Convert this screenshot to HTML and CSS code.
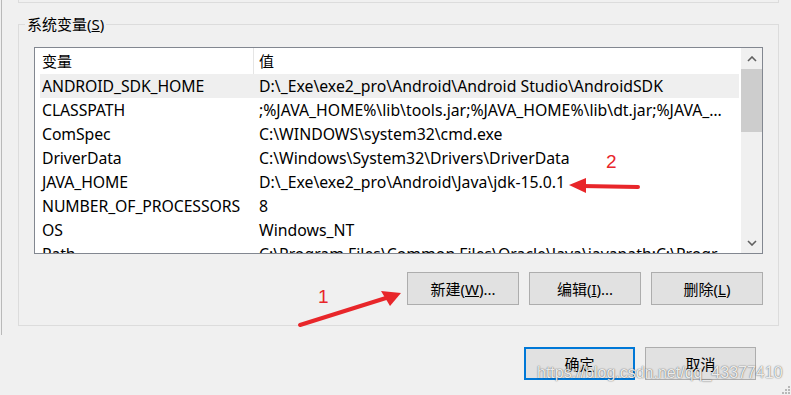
FILE: index.html
```html
<!DOCTYPE html>
<html lang="zh-CN">
<head>
    <meta charset="UTF-8">
    <meta name="viewport" content="width=device-width, initial-scale=1.0">
    <title>环境变量</title>
    <link rel="stylesheet" href="styles.css">
</head>
<body>
    <div class="dialog">
        <div class="page">
            <div class="prev-group"></div>

            <!-- 系统变量 -->
            <div class="group">
                <div class="group-title">系统变量(<u>S</u>)</div>
                <div class="listbox">
                    <div class="list">
                        <div class="list-head">
                            <div class="col-name">变量</div>
                            <div class="col-value">值</div>
                        </div>
                        <div class="row hot">
                            <div class="col-name">ANDROID_SDK_HOME</div>
                            <div class="col-value">D:\_Exe\exe2_pro\Android\Android Studio\AndroidSDK</div>
                        </div>
                        <div class="row">
                            <div class="col-name">CLASSPATH</div>
                            <div class="col-value">;%JAVA_HOME%\lib\tools.jar;%JAVA_HOME%\lib\dt.jar;%JAVA_HOME%\jre\lib</div>
                        </div>
                        <div class="row">
                            <div class="col-name">ComSpec</div>
                            <div class="col-value">C:\WINDOWS\system32\cmd.exe</div>
                        </div>
                        <div class="row">
                            <div class="col-name">DriverData</div>
                            <div class="col-value">C:\Windows\System32\Drivers\DriverData</div>
                        </div>
                        <div class="row">
                            <div class="col-name">JAVA_HOME</div>
                            <div class="col-value">D:\_Exe\exe2_pro\Android\Java\jdk-15.0.1</div>
                        </div>
                        <div class="row">
                            <div class="col-name">NUMBER_OF_PROCESSORS</div>
                            <div class="col-value">8</div>
                        </div>
                        <div class="row">
                            <div class="col-name">OS</div>
                            <div class="col-value">Windows_NT</div>
                        </div>
                        <div class="row">
                            <div class="col-name">Path</div>
                            <div class="col-value">C:\Program Files\Common Files\Oracle\Java\javapath;C:\Program Files</div>
                        </div>
                    </div>
                    <div class="scrollbar">
                        <div class="sb-btn">
                            <svg width="10" height="6" viewBox="0 0 10 6"><polyline points="1,5 5,1 9,5" fill="none" stroke="#606060" stroke-width="1.6"/></svg>
                        </div>
                        <div class="sb-track"><div class="sb-thumb"></div></div>
                        <div class="sb-btn">
                            <svg width="10" height="6" viewBox="0 0 10 6"><polyline points="1,1 5,5 9,1" fill="none" stroke="#606060" stroke-width="1.6"/></svg>
                        </div>
                    </div>
                </div>
                <div class="buttons">
                    <button class="btn">新建(<u>W</u>)...</button>
                    <button class="btn">编辑(<u>I</u>)...</button>
                    <button class="btn">删除(<u>L</u>)</button>
                </div>
            </div>
        </div>

        <div class="footer">
            <button class="btn primary">确定</button>
            <button class="btn">取消</button>
        </div>

        <!-- red notes drawn on the screenshot -->
        <svg class="marks" width="791" height="395" viewBox="0 0 791 395">
            <text x="318" y="303" class="mark-num">1</text>
            <line x1="300" y1="325" x2="386" y2="298" stroke="#e8262a" stroke-width="4" stroke-linecap="round"/>
            <polygon points="401,293 381,291 390,306" fill="#e8262a"/>
            <text x="606" y="168" class="mark-num">2</text>
            <line x1="638" y1="187" x2="582" y2="186" stroke="#e8262a" stroke-width="4" stroke-linecap="round"/>
            <polygon points="569,185 586,178 586,193" fill="#e8262a"/>
        </svg>

        <div class="watermark">https://blog.csdn.net/qq_43377410</div>

        <svg class="grip" width="10" height="10" viewBox="0 0 10 10">
            <rect x="7" y="1" width="2" height="2" fill="#b8b8b8"/>
            <rect x="4" y="4" width="2" height="2" fill="#b8b8b8"/>
            <rect x="7" y="4" width="2" height="2" fill="#b8b8b8"/>
            <rect x="1" y="7" width="2" height="2" fill="#b8b8b8"/>
            <rect x="4" y="7" width="2" height="2" fill="#b8b8b8"/>
            <rect x="7" y="7" width="2" height="2" fill="#b8b8b8"/>
        </svg>
    </div>
</body>
</html>
```

FILE: styles.css
```css
body {
    margin: 0;
    background-color: #f0f0f0;
    font-family: "Noto Sans", "Noto Sans CJK SC", sans-serif;
    font-size: 15px;
    color: #000;
}

.dialog {
    position: relative;
    width: 791px;
    height: 395px;
    overflow: hidden;
}

/* tab page */
.page {
    margin-left: 1px;
    height: 335px;
    border-left: 1px solid #b9b9b9;
}

.prev-group {
    height: 2px;
    margin: 0 12px 0 16px;
    border: 1px solid #dcdcdc;
    border-top: none;
}

.group {
    margin: 21px 12px 0 16px;
    border: 1px solid #dcdcdc;
    padding-bottom: 20px;
}

.group-title {
    width: fit-content;
    margin: -11px 0 0 6px;
    padding: 0 2px;
    line-height: 20px;
    background-color: #f0f0f0;
}

/* list view */
.listbox {
    display: flex;
    height: 205px;
    margin: 13px 15px 0 15px;
    border: 1px solid #828790;
    background-color: #fff;
    font-size: 15.8px;
}

.list {
    flex: 1;
    overflow: hidden;
    padding: 0 1px 0 5px;
}

.list-head,
.row {
    display: flex;
    white-space: nowrap;
}

.list-head {
    height: 26px;
    line-height: 26px;
    font-size: 15px;
}

.list-head .col-name {
    border-right: 1px solid #e5e5e5;
}

.row {
    height: 24px;
    line-height: 24px;
}

.row.hot {
    background-color: #efefef;
}

.col-name {
    width: 211px;
    padding-left: 2px;
    letter-spacing: -0.1px;
}

.col-value {
    flex: 1;
    min-width: 0;
    padding: 0 6px;
    overflow: hidden;
    text-overflow: ellipsis;
}

.list-head .col-value {
    padding-left: 5px;
}

.scrollbar {
    width: 21px;
    margin-left: 1px;
    display: flex;
    flex-direction: column;
    background-color: #f0f0f0;
}

.sb-btn {
    height: 21px;
    display: flex;
    align-items: center;
    justify-content: center;
}

.sb-track {
    flex: 1;
}

.sb-thumb {
    height: 63px;
    background-color: #cdcdcd;
}

/* buttons */
.buttons {
    display: flex;
    justify-content: flex-end;
    gap: 10px;
    margin: 18px 15px 0 0;
}

.btn {
    width: 112px;
    height: 33px;
    padding: 0;
    font-family: inherit;
    font-size: 15px;
    color: #000;
    background-color: #e1e1e1;
    border: 1px solid #adadad;
    border-radius: 0;
}

.btn.primary {
    border: 2px solid #0078d7;
}

.footer {
    display: flex;
    justify-content: flex-end;
    gap: 10px;
    padding: 12px 35px 0 0;
}

.footer .btn {
    width: 111px;
}

/* overlays */
.marks {
    position: absolute;
    top: 0;
    left: 0;
}

.mark-num {
    font-family: "Liberation Sans", sans-serif;
    font-size: 19px;
    fill: #e8262a;
}

.watermark {
    position: absolute;
    left: 537px;
    top: 363px;
    font-family: "Liberation Sans", sans-serif;
    font-size: 16px;
    line-height: 20px;
    color: rgba(255, 255, 255, 0.9);
    text-shadow: 0 0 1px rgba(0, 0, 0, 0.6), 0 0 2px rgba(0, 0, 0, 0.25);
}

.grip {
    position: absolute;
    right: 0;
    bottom: 0;
}
```
